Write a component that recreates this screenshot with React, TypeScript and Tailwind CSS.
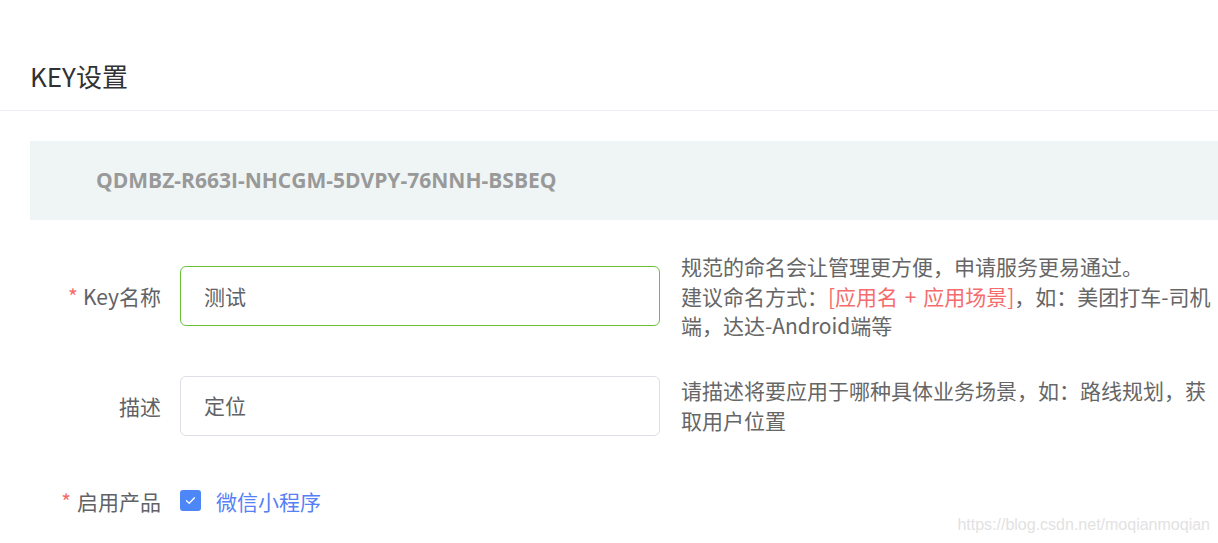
import React from "react";

const CJK = '"Noto Sans CJK SC", "Noto Sans", sans-serif';

function Label({ required, children }: { required?: boolean; children: React.ReactNode }) {
  return (
    <div className="w-[150px] shrink-0 pr-[19px] text-right text-[21px] leading-[30px] text-[#606266]">
      {required && <span className="mr-[5px] text-[#f56c6c]">*</span>}
      {children}
    </div>
  );
}

export default function App() {
  return (
    <div
      className="relative h-[543px] w-[1218px] overflow-hidden bg-white"
      style={{ fontFamily: CJK }}
    >
      <div className="mt-[60px] h-[32px] pl-[30px] text-[26px] leading-[32px] text-[#303133]">
        KEY设置
      </div>
      <div className="mt-[18px] h-px bg-[#ebeef5]" />
      <div className="pl-[30px] pt-[30px]">
        <div className="flex h-[79px] items-center bg-[#eff5f5] pl-[66px]">
          <span
            className="text-[21px] font-bold text-[#999999]"
            style={{ fontFamily: '"Open Sans", "Noto Sans", sans-serif' }}
          >
            QDMBZ-R663I-NHCGM-5DVPY-76NNH-BSBEQ
          </span>
        </div>

        <div className="mt-[32px] flex items-center">
          <Label required>Key名称</Label>
          <div className="flex h-[60px] w-[480px] shrink-0 items-center rounded-[6px] border border-[#67c23a] pl-[23px] text-[21px] text-[#606266]">
            测试
          </div>
          <div className="ml-[21px] w-[537px] text-[21px] leading-[29.5px] text-[#666666]">
            <p>规范的命名会让管理更方便，申请服务更易通过。</p>
            <p>
              建议命名方式：<span className="text-[#f56c6c]">[应用名 <span className="mx-[2px]">+</span> 应用场景]</span>，如：美团打车-司机端，达达-Android端等
            </p>
          </div>
        </div>

        <div className="mt-[35px] flex items-center">
          <Label>描述</Label>
          <div className="flex h-[60px] w-[480px] shrink-0 items-center rounded-[6px] border border-[#dcdfe6] pl-[23px] text-[21px] text-[#606266]">
            定位
          </div>
          <div className="ml-[21px] w-[537px] text-[21px] leading-[29.5px] text-[#666666]">
            请描述将要应用于哪种具体业务场景，如：路线规划，获取用户位置
          </div>
        </div>

        <div className="mt-[35px] flex h-[60px] items-center">
          <div className="w-[150px] shrink-0 pr-[19px] text-right text-[21px] leading-[30px] text-[#606266]">
            <span className="mr-[6px] text-[#f56c6c]">*</span>启用产品
          </div>
          <div className="flex items-center">
            <div className="flex h-[21px] w-[21px] items-center justify-center rounded-[3px] bg-[#4d86f7]">
              <svg width="13" height="13" viewBox="0 0 13 13" fill="none">
                <path d="M2.5 6.8 L5.2 9.3 L10.5 3.8" stroke="white" strokeWidth="1.3" strokeLinecap="round" strokeLinejoin="round" />
              </svg>
            </div>
            <span className="ml-[15px] text-[21px] leading-[30px] text-[#5680f5]">微信小程序</span>
          </div>
        </div>
      </div>

      <div
        className="absolute bottom-[6px] right-[8px] text-[16px] text-[#e2e2e2]"
        style={{ fontFamily: '"Liberation Sans", Arial, sans-serif' }}
      >
        https://blog.csdn.net/moqianmoqian
      </div>
    </div>
  );
}
